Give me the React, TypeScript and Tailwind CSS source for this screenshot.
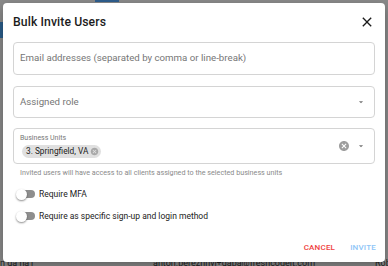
import React from "react";

function Arrow() {
  return (
    <svg width="10" height="10" viewBox="0 0 24 24" className="text-[#757575]">
      <path d="M7 10l5 5 5-5z" fill="currentColor" />
    </svg>
  );
}

function CancelCircle({ size, color }: { size: number; color: string }) {
  return (
    <svg width={size} height={size} viewBox="0 0 24 24">
      <path
        fill={color}
        d="M12 2C6.47 2 2 6.47 2 12s4.47 10 10 10 10-4.47 10-10S17.53 2 12 2zm5 13.59L15.59 17 12 13.41 8.41 17 7 15.59 10.59 12 7 8.41 8.41 7 12 10.59 15.59 7 17 8.41 13.41 12 17 15.59z"
      />
    </svg>
  );
}

function Toggle({ label }: { label: string }) {
  return (
    <div className="flex items-center h-[14px]">
      <div className="relative w-[24px] h-[14px] flex items-center">
        <div className="ml-[4px] w-[17px] h-[8px] rounded-full bg-[#8e8e8e]" />
        <div className="absolute left-[2px] top-[1.5px] w-[11px] h-[11px] rounded-full bg-white shadow-[0_1px_2px_rgba(0,0,0,0.45)]" />
      </div>
      <span className="ml-[1px] text-[8.5px] text-[#222]">{label}</span>
    </div>
  );
}

export default function App() {
  return (
    <div
      className="relative w-[388px] h-[266px] overflow-hidden bg-[#8a8a8a]"
      style={{ fontFamily: "Roboto, 'Liberation Sans', sans-serif" }}
    >
      {/* underlying page fragments */}
      <div className="absolute left-[95px] top-0 w-[24px] h-[2px] bg-[#2f5f8f]" />
      <div className="absolute left-0 top-[22px] w-[3px] h-[16px] bg-[#2a5d8a]" />
      <div className="absolute left-0 top-[259px] text-[9px] text-[#222] leading-none whitespace-nowrap">
        n ga ha1
      </div>
      <div className="absolute left-[153px] top-[259px] text-[9px] text-[#222] leading-none whitespace-nowrap">
        anton.berezhnyi+gaba@freshcodeit.com
      </div>
      <div className="absolute left-[375px] top-[259px] text-[9px] text-[#222] leading-none whitespace-nowrap">
        Rob
      </div>

      {/* dialog */}
      <div className="absolute left-[3px] top-[3px] w-[382px] h-[259px] bg-white rounded-[4px] shadow-[0_4px_12px_rgba(0,0,0,0.3)] flex flex-col">
        <div className="h-[39px] pl-[10px] pr-[10px] flex items-center justify-between pb-[1px]">
          <span className="text-[12.2px] font-medium text-[#1c1c1c] tracking-[0.1px]">
            Bulk Invite Users
          </span>
          <svg width="16" height="16" viewBox="0 0 24 24">
            <path
              fill="#1c1c1c"
              d="M19 6.41L17.59 5 12 10.59 6.41 5 5 6.41 10.59 12 5 17.59 6.41 19 12 13.41 17.59 19 19 17.59 13.41 12z"
            />
          </svg>
        </div>

        <div className="px-[10px] flex flex-col">
          <div className="h-[33px] border border-[#d4d4d4] rounded-[4px] px-[6px] flex items-center">
            <span className="text-[9.7px] text-[#767676]">
              Email addresses (separated by comma or line-break)
            </span>
          </div>

          <div className="mt-[11px] h-[32px] border border-[#d4d4d4] rounded-[4px] pl-[6px] pr-[8px] flex items-center justify-between">
            <span className="text-[9.7px] text-[#767676]">Assigned role</span>
            <Arrow />
          </div>

          <div className="mt-[10px] h-[36px] border border-[#d4d4d4] rounded-[4px] pl-[6px] pr-[8px] flex items-center justify-between">
            <div className="flex flex-col">
              <span className="text-[7px] leading-[9px] text-[#777]">Business Units</span>
              <div className="mt-[2px] ml-[2px] h-[13px] rounded-full bg-[#e0e0e0] pl-[4px] pr-[2px] flex items-center gap-[2px] w-fit">
                <span className="text-[8.3px] text-[#222]">3. Springfield, VA</span>
                <CancelCircle size={9} color="#a8a8a8" />
              </div>
            </div>
            <div className="flex items-center gap-[6px]">
              <CancelCircle size={12} color="#9e9e9e" />
              <Arrow />
            </div>
          </div>

          <div className="mt-[4px] pl-[7px] text-[7.2px] text-[#8a8a8a] leading-[10px]">
            Invited users will have access to all clients assigned to the selected business units
          </div>

          <div className="mt-[9px] pl-[1px] flex flex-col gap-[8px]">
            <Toggle label="Require MFA" />
            <Toggle label="Require as specific sign-up and login method" />
          </div>
        </div>

        <div className="mt-auto mb-[8px] pr-[9px] flex justify-end items-center gap-[15px]">
          <span className="text-[8px] font-medium text-[#ef3e3e] tracking-[0.2px]">CANCEL</span>
          <span className="text-[8px] font-medium text-[#8ec5f7] tracking-[0.2px]">INVITE</span>
        </div>
      </div>
    </div>
  );
}
